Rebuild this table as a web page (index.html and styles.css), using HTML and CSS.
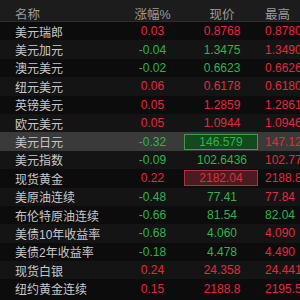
FILE: index.html
```html
<!DOCTYPE html>
<html lang="zh">
<head>
<meta charset="utf-8">
<link rel="stylesheet" href="styles.css">
</head>
<body>
<div class="board">
  <div class="row head">
    <div class="c-name">名称</div>
    <div class="c-chg">涨幅%</div>
    <div class="c-price">现价</div>
    <div class="c-high">最高</div>
  </div>
  <div class="row odd"><div class="c-name">美元瑞郎</div><div class="c-chg up">0.03</div><div class="c-price up">0.8768</div><div class="c-high up">0.8780</div></div>
  <div class="row even"><div class="c-name">美元加元</div><div class="c-chg down">-0.04</div><div class="c-price down">1.3475</div><div class="c-high up">1.3490</div></div>
  <div class="row odd"><div class="c-name">澳元美元</div><div class="c-chg down">-0.02</div><div class="c-price down">0.6623</div><div class="c-high up">0.6626</div></div>
  <div class="row even"><div class="c-name">纽元美元</div><div class="c-chg up">0.06</div><div class="c-price up">0.6178</div><div class="c-high up">0.6180</div></div>
  <div class="row odd"><div class="c-name">英镑美元</div><div class="c-chg up">0.05</div><div class="c-price up">1.2859</div><div class="c-high up">1.2861</div></div>
  <div class="row even"><div class="c-name">欧元美元</div><div class="c-chg up">0.05</div><div class="c-price up">1.0944</div><div class="c-high up">1.0946</div></div>
  <div class="row selected"><div class="c-name">美元日元</div><div class="c-chg down">-0.32</div><div class="c-price down"><span class="flash flash-down">146.579</span></div><div class="c-high up">147.12</div></div>
  <div class="row even"><div class="c-name">美元指数</div><div class="c-chg down">-0.09</div><div class="c-price down">102.6436</div><div class="c-high up">102.77</div></div>
  <div class="row odd"><div class="c-name">现货黄金</div><div class="c-chg up">0.22</div><div class="c-price up"><span class="flash flash-up">2182.04</span></div><div class="c-high up">2188.8</div></div>
  <div class="row even"><div class="c-name">美原油连续</div><div class="c-chg down">-0.48</div><div class="c-price down">77.41</div><div class="c-high up">77.84</div></div>
  <div class="row odd"><div class="c-name">布伦特原油连续</div><div class="c-chg down">-0.66</div><div class="c-price down">81.54</div><div class="c-high down">82.04</div></div>
  <div class="row even"><div class="c-name">美债10年收益率</div><div class="c-chg down">-0.68</div><div class="c-price down">4.060</div><div class="c-high up">4.090</div></div>
  <div class="row odd"><div class="c-name">美债2年收益率</div><div class="c-chg down">-0.18</div><div class="c-price down">4.478</div><div class="c-high up">4.490</div></div>
  <div class="row even"><div class="c-name">现货白银</div><div class="c-chg up">0.24</div><div class="c-price up">24.358</div><div class="c-high up">24.441</div></div>
  <div class="row odd"><div class="c-name">纽约黄金连续</div><div class="c-chg up">0.15</div><div class="c-price up">2188.8</div><div class="c-high up">2195.5</div></div>
</div>
</body>
</html>
```
FILE: styles.css
```css
html, body {
  margin: 0;
  padding: 0;
  background: #0c0c0c;
  overflow: hidden;
}
.board {
  width: 300px;
  height: 300px;
  overflow: hidden;
  font-family: "Liberation Sans", "Noto Sans CJK SC", sans-serif;
  font-size: 12px;
  color: #c8c8c8;
}
.row {
  display: grid;
  grid-template-columns: 110px 55px 84px 1fr;
  padding-left: 15px;
  height: 18.4px;
  align-items: center;
  white-space: nowrap;
}
.head {
  height: 22px;
  padding-top: 4px;
  box-sizing: border-box;
  background: #1c1c1c;
  border-bottom: 1px solid #2e2e2e;
  color: #9a9a9a;
  font-size: 12.5px;
  align-items: center;
}
.odd { background: #0c0c0c; }
.even { background: #141414; }
.selected { background: #3a3a3a; }
.c-name { overflow: hidden; }
.c-chg { text-align: center; }
.c-price { text-align: center; }
.c-high { padding-left: 1px; overflow: hidden; }
.up { color: #e6283d; }
.down { color: #30b34b; }
.flash {
  display: inline-block;
  width: 74px;
  height: 16px;
  line-height: 14px;
  box-sizing: border-box;
  text-align: center;
  margin-right: 2px;
}
.flash-down {
  background: #134a1d;
  border: 1px solid #3c9d45;
}
.flash-up {
  background: #4a1b20;
  border: 1px solid #a8323e;
}
```
